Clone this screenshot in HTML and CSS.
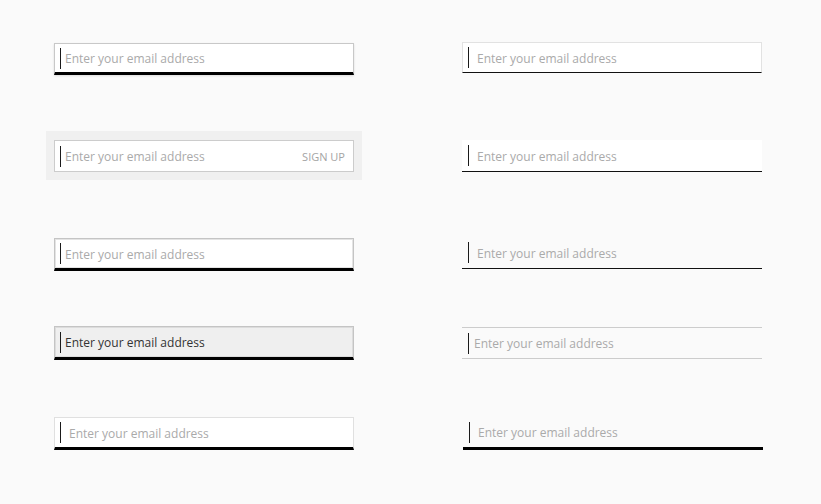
FILE: index.html
```html
<!DOCTYPE html>
<html lang="en">
<head>
<meta charset="utf-8">
<title>Email inputs</title>
<link rel="stylesheet" href="styles.css">
</head>
<body>
<div class="grid">
  <div class="field l1"><span class="caret"></span><span class="ph">Enter your email address</span></div>
  <div class="field r1"><span class="caret"></span><span class="ph">Enter your email address</span></div>

  <div class="signup">
    <div class="field l2"><span class="caret"></span><span class="ph">Enter your email address</span><span class="btn">SIGN UP</span></div>
  </div>
  <div class="field r2"><span class="caret"></span><span class="ph">Enter your email address</span></div>

  <div class="field l3"><span class="caret"></span><span class="ph">Enter your email address</span></div>
  <div class="field r3"><span class="caret"></span><span class="ph">Enter your email address</span></div>

  <div class="field l4"><span class="caret"></span><span class="ph dark">Enter your email address</span></div>
  <div class="field r4"><span class="caret"></span><span class="ph">Enter your email address</span></div>

  <div class="field l5"><span class="caret"></span><span class="ph">Enter your email address</span></div>
  <div class="field r5"><span class="caret"></span><span class="ph">Enter your email address</span></div>
</div>
</body>
</html>
```
FILE: styles.css
```css
html, body {
  margin: 0;
  background: #fafafa;
  font-family: "Open Sans", "Liberation Sans", sans-serif;
  font-size: 12px;
}

.grid {
  display: grid;
  grid-template-columns: 316px 302px;
  grid-template-rows: 89px 106px 89px 91px 87px;
  column-gap: 100px;
  padding: 42px 0 0 46px;
  align-items: start;
}

.field {
  display: flex;
  align-items: center;
  box-sizing: border-box;
  width: 300px;
  line-height: 16px;
}

.caret {
  flex: none;
  width: 1px;
  height: 21px;
  background: #1a1a1a;
}

.ph {
  color: #aaa;
  margin-left: 4px;
  padding-top: 2px;
  white-space: nowrap;
}

.ph.dark {
  color: #333;
}

/* left column */
.l1 {
  margin: 1px 0 0 8px;
  height: 32px;
  padding-left: 5px;
  background: #fff;
  border: 1px solid #c8c8c8;
  border-bottom: 3px solid #000;
  box-shadow: 0 1px 2px rgba(0, 0, 0, 0.12);
}

.signup {
  box-sizing: border-box;
  width: 316px;
  padding: 9px 8px 8px;
  background: #f0f0f0;
}

.l2 {
  height: 32px;
  padding: 0 8px 0 5px;
  background: #fff;
  border: 1px solid #ccc;
}

.btn {
  margin-left: auto;
  padding-top: 2px;
  font-size: 11px;
  color: #a4a4a4;
}

.l3 {
  margin: 1px 0 0 8px;
  height: 33px;
  padding-left: 5px;
  background: #fff;
  border: 1px solid #c4c4c4;
  border-bottom: 3px solid #000;
  box-shadow: inset 0 0 0 1px #e4e4e4;
}

.l4 {
  margin-left: 8px;
  height: 34px;
  padding-left: 5px;
  background: #efefef;
  border: 1px solid #c4c4c4;
  border-bottom: 3px solid #000;
  box-shadow: inset 0 0 0 1px #dcdcdc;
}

.l5 {
  margin-left: 8px;
  height: 33px;
  padding-left: 5px;
  background: #fff;
  border: 1px solid #e0e0e0;
  border-bottom: 3px solid #000;
}

.l5 .ph {
  margin-left: 8px;
}

/* right column */
.r1 {
  height: 31px;
  padding-left: 5px;
  background: #fff;
  border: 1px solid #e2e2e2;
  border-bottom: 1px solid #111;
}

.r1 .ph,
.r2 .ph,
.r3 .ph,
.r5 .ph {
  margin-left: 8px;
}

.r2 {
  margin-top: 9px;
  height: 32px;
  padding-left: 6px;
  background: #fff;
  border-bottom: 1px solid #111;
}

.r3 {
  height: 32px;
  padding-left: 6px;
  border-bottom: 1px solid #111;
}

.r4 {
  margin-top: 1px;
  height: 32px;
  padding-left: 6px;
  border-top: 1px solid #ccc;
  border-bottom: 1px solid #ccc;
}

.r4 .ph {
  margin-left: 5px;
}

.r5 {
  margin-left: 1px;
  height: 33px;
  padding-left: 6px;
  border-bottom: 3px solid #000;
}
```
